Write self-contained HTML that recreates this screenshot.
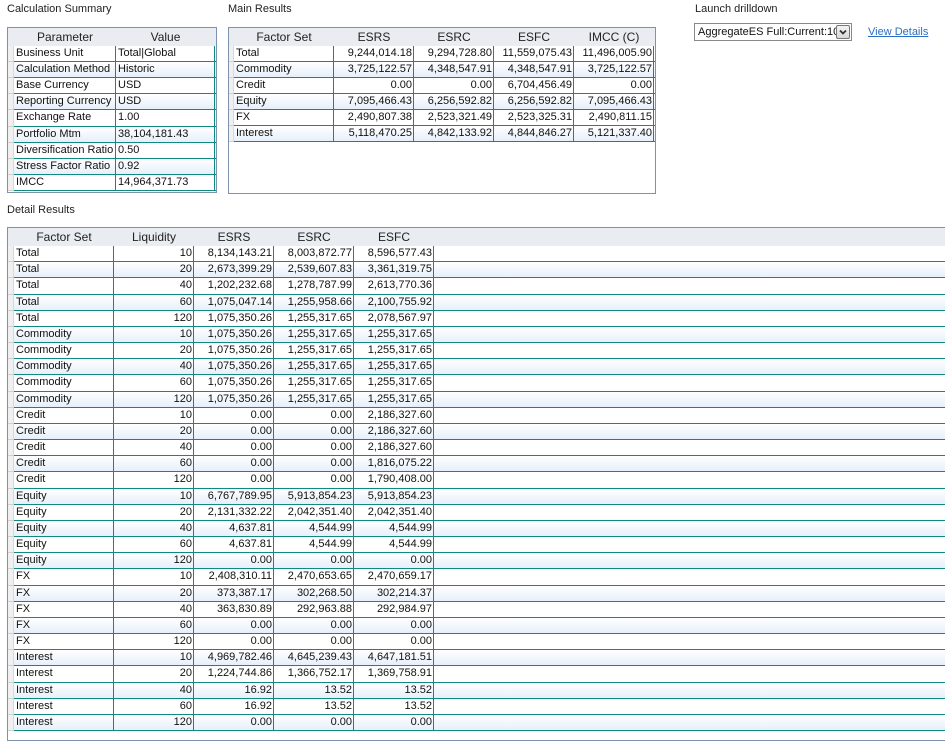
<!DOCTYPE html>
<html><head><meta charset="utf-8"><style>
body{margin:0;width:945px;height:738px;overflow:hidden;background:#fff;font-family:"Liberation Sans",sans-serif;font-size:11px;color:#111;position:relative}
.lbl{position:absolute;font-size:11px;color:#222}
.box{position:absolute;border:1px solid #7d93ad;background:#fff;overflow:hidden}
.c{position:absolute;white-space:nowrap;overflow:hidden;line-height:16px;box-sizing:border-box;padding:0 2px}
.h{position:absolute;background:#e9ecf0}
.hc{position:absolute;text-align:center;line-height:18px;font-size:12px;color:#222}
.r{position:absolute;border-bottom:1px solid #0f8a80;box-sizing:border-box}
.alt{background:linear-gradient(#fff,#e6effa)}
.v{position:absolute;width:1px;background:#0f8a80}
.g{position:absolute;background:#f0f0f0;border-right:1px solid #d8d8d8;border-bottom:1px solid #d0d0d0;box-sizing:border-box}
</style></head><body>
<div class="lbl" style="left:7px;top:3px">Calculation Summary</div>
<div class="lbl" style="left:228px;top:3px">Main Results</div>
<div class="lbl" style="left:695px;top:3px">Launch drilldown</div>
<div class="lbl" style="left:7px;top:204px">Detail Results</div>
<div style="position:absolute;left:694px;top:23px;width:158px;height:18px;border:1px solid #8a8a8a;box-sizing:border-box;font-size:11px;line-height:16px;padding-left:3px;white-space:nowrap;overflow:hidden">AggregateES Full:Current:10</div>
<div style="position:absolute;left:836px;top:25px;width:14px;height:14px;border:1px solid #777;box-sizing:border-box;background:linear-gradient(#f4f4f4,#d8d8d8);border-radius:2px"><svg width="12" height="12" style="position:absolute;left:0;top:0"><path d="M3 4.5 L6 7.5 L9 4.5" stroke="#333" stroke-width="1.8" fill="none"/></svg></div>
<div class="lbl" style="left:868px;top:26px;color:#2a6fc4;text-decoration:underline">View Details</div>
<div id="b1" class="box" style="left:7px;top:27px;width:208px;height:164px"></div>
<div id="b2" class="box" style="left:228px;top:27px;width:426px;height:165px"></div>
<div id="b3" class="box" style="left:7px;top:227px;width:945px;height:512px"></div>
<script>
function grid(id,cols,heads,rows,hh,pitch,fullW,align){
 var b=document.getElementById(id),s='';
 var W=fullW;
 s+='<div class="h" style="left:0;top:0;width:'+W+'px;height:'+hh+'px"></div>';
 var x=cols[0];
 s+='<div class="g" style="left:0;top:0;width:'+x+'px;height:'+hh+'px;background:#e9ecf0;border:none"></div>';
 for(var i=0;i<heads.length;i++){s+='<div class="hc" style="left:'+cols[i]+'px;width:'+(cols[i+1]-cols[i])+'px;top:0">'+heads[i]+'</div>';}
 for(var r=0;r<rows.length;r++){
  var t=Math.round(hh+r*pitch),t2=Math.round(hh+(r+1)*pitch),h=t2-t;
  s+='<div class="r'+(r%2?' alt':'')+'" style="left:'+cols[0]+'px;top:'+t+'px;width:'+(W-cols[0])+'px;height:'+h+'px"></div>';
  s+='<div class="g" style="left:0;top:'+t+'px;width:'+cols[0]+'px;height:'+h+'px"></div>';
  for(var i=0;i<rows[r].length;i++){
   s+='<div class="c" style="left:'+cols[i]+'px;width:'+(cols[i+1]-cols[i])+'px;top:'+(t-1)+'px;text-align:'+align[i]+'">'+rows[r][i]+'</div>';
  }
  for(var i=1;i<cols.length;i++){s+='<div class="v" style="left:'+(cols[i]-1)+'px;top:'+t+'px;height:'+h+'px"></div>';}
 }
 b.innerHTML=s;
}
grid('b1',[6,108,207],['Parameter','Value'],[
['Business Unit','Total|Global'],['Calculation Method','Historic'],['Base Currency','USD'],['Reporting Currency','USD'],['Exchange Rate','1.00'],['Portfolio Mtm','38,104,181.43'],['Diversification Ratio','0.50'],['Stress Factor Ratio','0.92'],['IMCC','14,964,371.73']],18,16.1,208,['left','left']);
grid('b2',[5,105,185,265,345,425],['Factor Set','ESRS','ESRC','ESFC','IMCC (C)'],[
['Total','9,244,014.18','9,294,728.80','11,559,075.43','11,496,005.90'],
['Commodity','3,725,122.57','4,348,547.91','4,348,547.91','3,725,122.57'],
['Credit','0.00','0.00','6,704,456.49','0.00'],
['Equity','7,095,466.43','6,256,592.82','6,256,592.82','7,095,466.43'],
['FX','2,490,807.38','2,523,321.49','2,523,325.31','2,490,811.15'],
['Interest','5,118,470.25','4,842,133.92','4,844,846.27','5,121,337.40']],18,16,426,['left','right','right','right','right']);
var d=[
['Total',10,'8,134,143.21','8,003,872.77','8,596,577.43'],['Total',20,'2,673,399.29','2,539,607.83','3,361,319.75'],['Total',40,'1,202,232.68','1,278,787.99','2,613,770.36'],['Total',60,'1,075,047.14','1,255,958.66','2,100,755.92'],['Total',120,'1,075,350.26','1,255,317.65','2,078,567.97'],
['Commodity',10,'1,075,350.26','1,255,317.65','1,255,317.65'],['Commodity',20,'1,075,350.26','1,255,317.65','1,255,317.65'],['Commodity',40,'1,075,350.26','1,255,317.65','1,255,317.65'],['Commodity',60,'1,075,350.26','1,255,317.65','1,255,317.65'],['Commodity',120,'1,075,350.26','1,255,317.65','1,255,317.65'],
['Credit',10,'0.00','0.00','2,186,327.60'],['Credit',20,'0.00','0.00','2,186,327.60'],['Credit',40,'0.00','0.00','2,186,327.60'],['Credit',60,'0.00','0.00','1,816,075.22'],['Credit',120,'0.00','0.00','1,790,408.00'],
['Equity',10,'6,767,789.95','5,913,854.23','5,913,854.23'],['Equity',20,'2,131,332.22','2,042,351.40','2,042,351.40'],['Equity',40,'4,637.81','4,544.99','4,544.99'],['Equity',60,'4,637.81','4,544.99','4,544.99'],['Equity',120,'0.00','0.00','0.00'],
['FX',10,'2,408,310.11','2,470,653.65','2,470,659.17'],['FX',20,'373,387.17','302,268.50','302,214.37'],['FX',40,'363,830.89','292,963.88','292,984.97'],['FX',60,'0.00','0.00','0.00'],['FX',120,'0.00','0.00','0.00'],
['Interest',10,'4,969,782.46','4,645,239.43','4,647,181.51'],['Interest',20,'1,224,744.86','1,366,752.17','1,369,758.91'],['Interest',40,'16.92','13.52','13.52'],['Interest',60,'16.92','13.52','13.52'],['Interest',120,'0.00','0.00','0.00']];
grid('b3',[6,106,186,266,346,426],['Factor Set','Liquidity','ESRS','ESRC','ESFC'],d,18,16.17,945,['left','right','right','right','right']);
</script>
</body></html>
